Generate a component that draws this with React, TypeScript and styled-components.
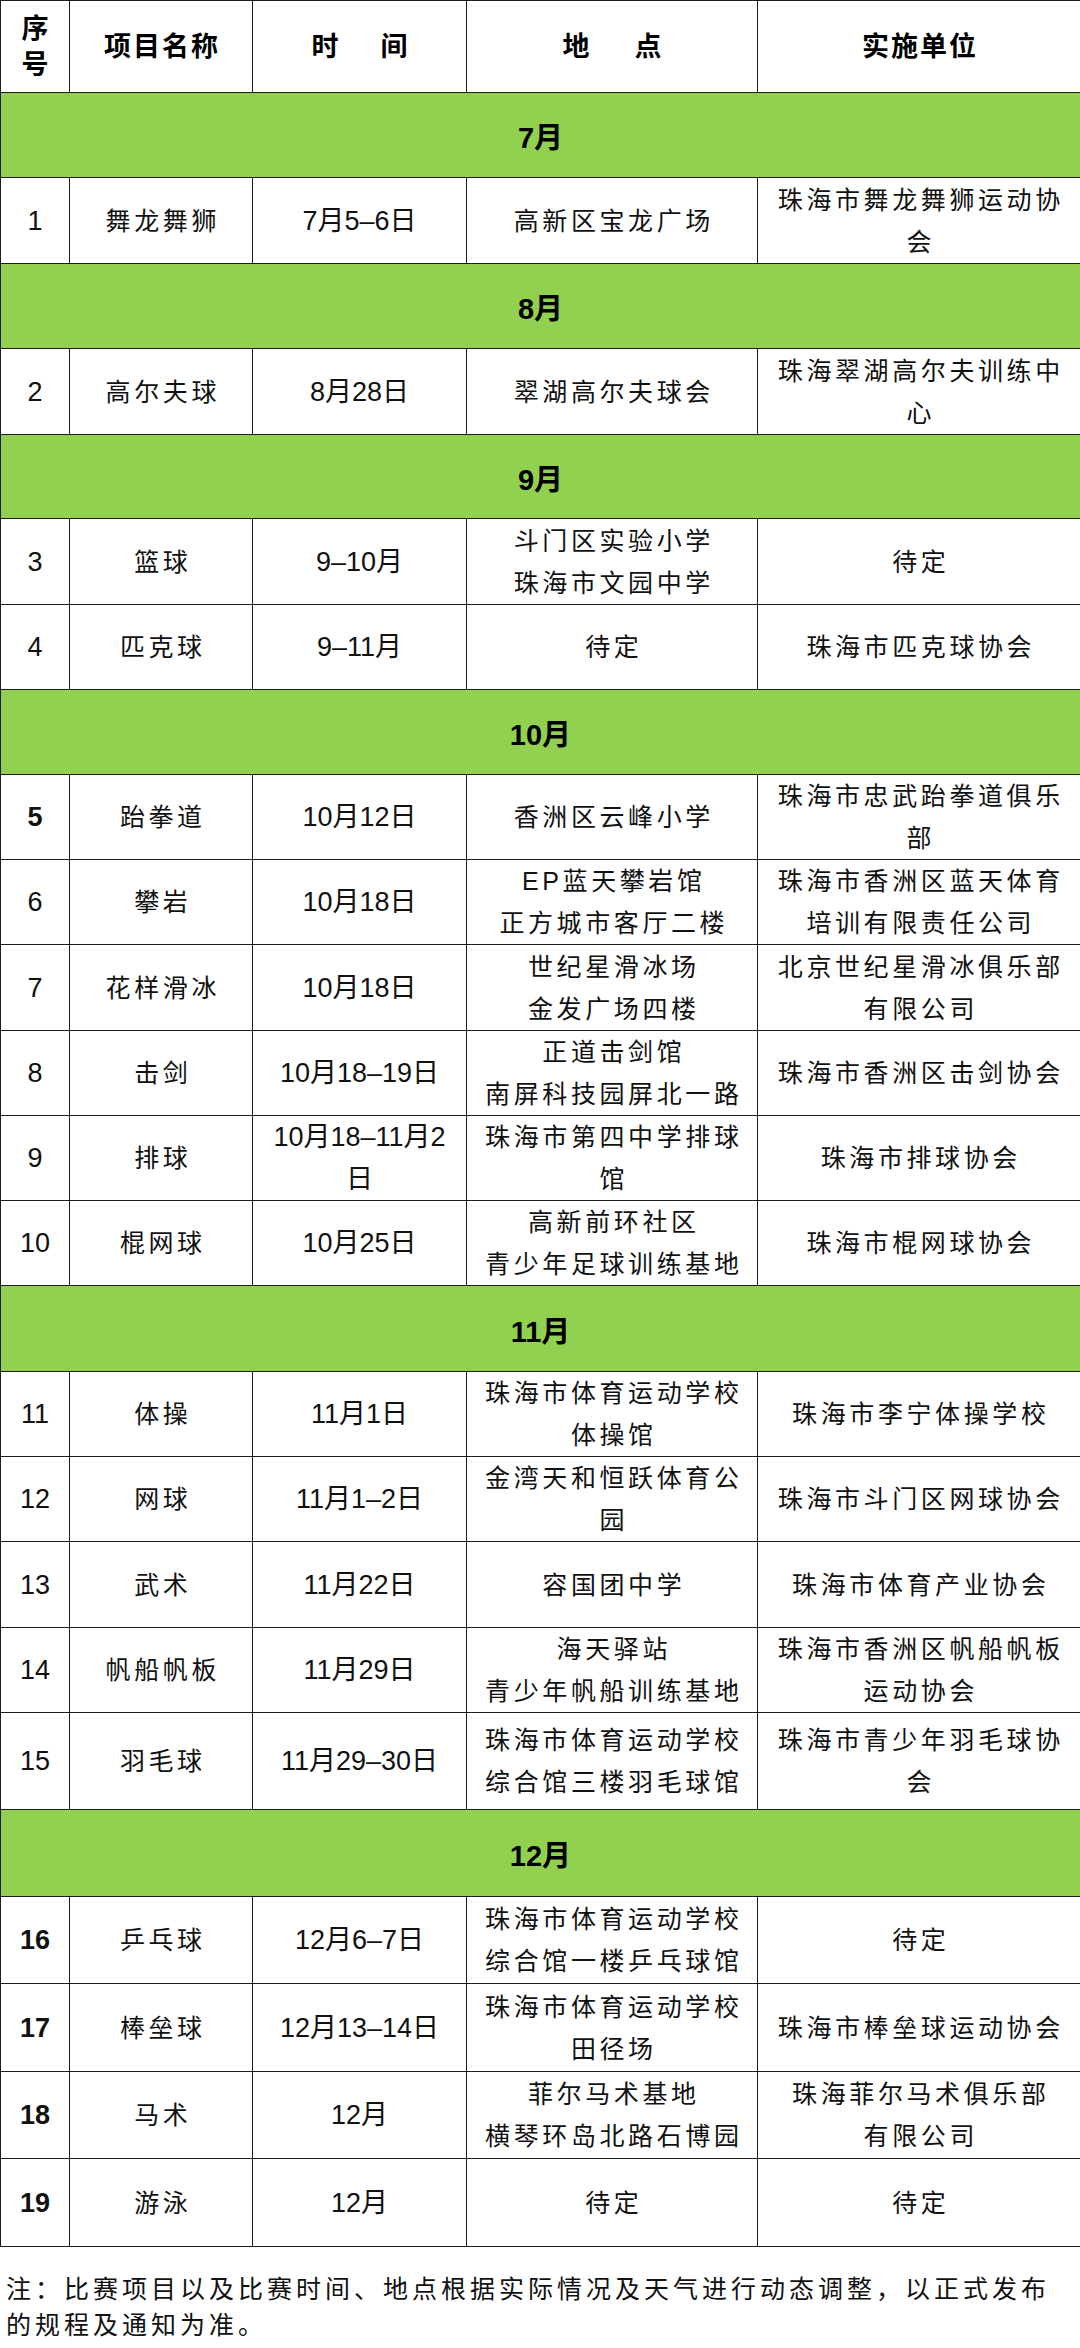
import React from "react";
import styled, { createGlobalStyle } from "styled-components";

const Global = createGlobalStyle`
  html, body { margin: 0; padding: 0; background: #ffffff; }
  body { font-family: "Liberation Sans", "Noto Sans CJK SC", sans-serif; color: #0a0a0a; }
`;

const Page = styled.div`
  width: 1080px;
  background: #fff;
`;

const Table = styled.table`
  width: 1080px;
  border-collapse: collapse;
  table-layout: fixed;
`;

const HeadCell = styled.th<{ $spread?: number }>`
  border: 1.5px solid #1c1c1c;
  font-family: "Liberation Sans", "Noto Sans CJK SC", sans-serif;
  font-weight: 700;
  font-size: 27px;
  line-height: 36px;
  letter-spacing: ${(p) => (p.$spread ?? 2)}px;
  padding: 0 0 0 ${(p) => (p.$spread ?? 2)}px;
  text-align: center;
  vertical-align: middle;
  color: #000;
`;

const Row = styled.tr<{ $h: number }>`
  height: ${(p) => p.$h}px;
`;

const MonthCell = styled.td`
  background: #92d050;
  border: 1.5px solid #1c1c1c;
  font-weight: 700;
  font-size: 29px;
  text-align: center;
  vertical-align: middle;
  color: #000;
  padding: 0;
`;

const Cell = styled.td<{ $kind: "num" | "time" | "text"; $bold?: boolean }>`
  border: 1.5px solid #1c1c1c;
  text-align: center;
  vertical-align: middle;
  line-height: 42px;
  white-space: nowrap;
  overflow: hidden;
  font-weight: ${(p) => (p.$bold ? 700 : 400)};
  font-size: ${(p) => (p.$kind === "text" ? 25 : 27)}px;
  letter-spacing: ${(p) => (p.$kind === "text" ? 3.6 : 0)}px;
  padding: 0 0 0 ${(p) => (p.$kind === "text" ? 3.6 : 0)}px;
  color: #111;
`;

const Note = styled.p`
  margin: 0;
  padding: 22px 0 0 6px;
  font-family: "Noto Sans CJK SC", sans-serif;
  font-size: 25px;
  line-height: 36px;
  letter-spacing: 4px;
  white-space: nowrap;
  color: #111;
`;

type Item = {
  no: string;
  bold?: boolean;
  name: string;
  time: string[];
  place: string[];
  org: string[];
  h: number;
};

type Group = { month: string; h: number; items: Item[] };

const groups: Group[] = [
  {
    month: "7月",
    h: 85,
    items: [
      { no: "1", name: "舞龙舞狮", time: ["7月5–6日"], place: ["高新区宝龙广场"], org: ["珠海市舞龙舞狮运动协", "会"], h: 86 },
    ],
  },
  {
    month: "8月",
    h: 85,
    items: [
      { no: "2", name: "高尔夫球", time: ["8月28日"], place: ["翠湖高尔夫球会"], org: ["珠海翠湖高尔夫训练中", "心"], h: 86 },
    ],
  },
  {
    month: "9月",
    h: 84,
    items: [
      { no: "3", name: "篮球", time: ["9–10月"], place: ["斗门区实验小学", "珠海市文园中学"], org: ["待定"], h: 86 },
      { no: "4", name: "匹克球", time: ["9–11月"], place: ["待定"], org: ["珠海市匹克球协会"], h: 85 },
    ],
  },
  {
    month: "10月",
    h: 85,
    items: [
      { no: "5", bold: true, name: "跆拳道", time: ["10月12日"], place: ["香洲区云峰小学"], org: ["珠海市忠武跆拳道俱乐", "部"], h: 85 },
      { no: "6", name: "攀岩", time: ["10月18日"], place: ["EP蓝天攀岩馆", "正方城市客厅二楼"], org: ["珠海市香洲区蓝天体育", "培训有限责任公司"], h: 85 },
      { no: "7", name: "花样滑冰", time: ["10月18日"], place: ["世纪星滑冰场", "金发广场四楼"], org: ["北京世纪星滑冰俱乐部", "有限公司"], h: 86 },
      { no: "8", name: "击剑", time: ["10月18–19日"], place: ["正道击剑馆", "南屏科技园屏北一路"], org: ["珠海市香洲区击剑协会"], h: 85 },
      { no: "9", name: "排球", time: ["10月18–11月2", "日"], place: ["珠海市第四中学排球", "馆"], org: ["珠海市排球协会"], h: 85 },
      { no: "10", name: "棍网球", time: ["10月25日"], place: ["高新前环社区", "青少年足球训练基地"], org: ["珠海市棍网球协会"], h: 85 },
    ],
  },
  {
    month: "11月",
    h: 86,
    items: [
      { no: "11", name: "体操", time: ["11月1日"], place: ["珠海市体育运动学校", "体操馆"], org: ["珠海市李宁体操学校"], h: 85 },
      { no: "12", name: "网球", time: ["11月1–2日"], place: ["金湾天和恒跃体育公", "园"], org: ["珠海市斗门区网球协会"], h: 85 },
      { no: "13", name: "武术", time: ["11月22日"], place: ["容国团中学"], org: ["珠海市体育产业协会"], h: 86 },
      { no: "14", name: "帆船帆板", time: ["11月29日"], place: ["海天驿站", "青少年帆船训练基地"], org: ["珠海市香洲区帆船帆板", "运动协会"], h: 85 },
      { no: "15", name: "羽毛球", time: ["11月29–30日"], place: ["珠海市体育运动学校", "综合馆三楼羽毛球馆"], org: ["珠海市青少年羽毛球协", "会"], h: 97 },
    ],
  },
  {
    month: "12月",
    h: 87,
    items: [
      { no: "16", bold: true, name: "乒乓球", time: ["12月6–7日"], place: ["珠海市体育运动学校", "综合馆一楼乒乓球馆"], org: ["待定"], h: 87 },
      { no: "17", bold: true, name: "棒垒球", time: ["12月13–14日"], place: ["珠海市体育运动学校", "田径场"], org: ["珠海市棒垒球运动协会"], h: 88 },
      { no: "18", bold: true, name: "马术", time: ["12月"], place: ["菲尔马术基地", "横琴环岛北路石博园"], org: ["珠海菲尔马术俱乐部", "有限公司"], h: 87 },
      { no: "19", bold: true, name: "游泳", time: ["12月"], place: ["待定"], org: ["待定"], h: 88 },
    ],
  },
];

const Lines: React.FC<{ lines: string[] }> = ({ lines }) => (
  <>
    {lines.map((l, i) => (
      <React.Fragment key={i}>
        {i > 0 && <br />}
        {l}
      </React.Fragment>
    ))}
  </>
);

export default function App() {
  return (
    <Page>
      <Global />
      <Table>
        <colgroup>
          <col style={{ width: 69 }} />
          <col style={{ width: 183 }} />
          <col style={{ width: 214 }} />
          <col style={{ width: 291 }} />
          <col style={{ width: 323 }} />
        </colgroup>
        <thead>
          <Row $h={92}>
            <HeadCell $spread={0}>序<br />号</HeadCell>
            <HeadCell>项目名称</HeadCell>
            <HeadCell $spread={42}>时间</HeadCell>
            <HeadCell $spread={45}>地点</HeadCell>
            <HeadCell>实施单位</HeadCell>
          </Row>
        </thead>
        <tbody>
          {groups.map((g) => (
            <React.Fragment key={g.month}>
              <Row $h={g.h}>
                <MonthCell colSpan={5}>{g.month}</MonthCell>
              </Row>
              {g.items.map((it) => (
                <Row $h={it.h} key={it.no}>
                  <Cell $kind="num" $bold={it.bold}>{it.no}</Cell>
                  <Cell $kind="text">{it.name}</Cell>
                  <Cell $kind="time"><Lines lines={it.time} /></Cell>
                  <Cell $kind="text"><Lines lines={it.place} /></Cell>
                  <Cell $kind="text"><Lines lines={it.org} /></Cell>
                </Row>
              ))}
            </React.Fragment>
          ))}
        </tbody>
      </Table>
      <Note>
        注：比赛项目以及比赛时间、地点根据实际情况及天气进行动态调整，以正式发布
        <br />
        的规程及通知为准。
      </Note>
    </Page>
  );
}
